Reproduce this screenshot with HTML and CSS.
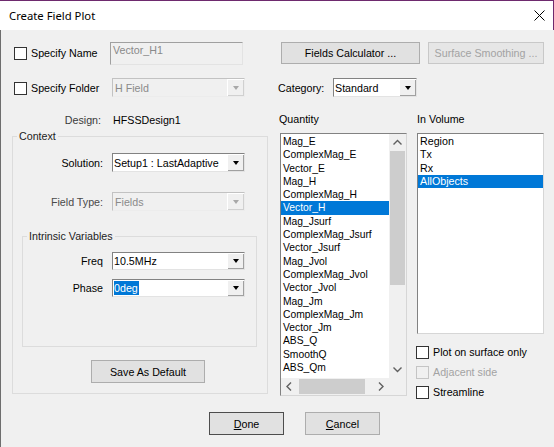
FILE: index.html
```html
<!DOCTYPE html>
<html>
<head>
<meta charset="utf-8">
<title>Create Field Plot</title>
<link rel="stylesheet" href="styles.css">
</head>
<body>
<div class="window">
  <div class="titlebar">
    <span class="title">Create Field Plot</span>
    <svg class="close" width="11" height="11" viewBox="0 0 11 11"><path d="M0.5 0.5L10.5 10.5M10.5 0.5L0.5 10.5" stroke="#000" stroke-width="1" fill="none"/></svg>
  </div>
  <div class="client">
    <div class="row row-a">
      <div class="left-a">
        <span class="cb cb-a"></span><span class="cb-label w-name">Specify Name</span>
        <div class="edit disabled">Vector_H1</div>
      </div>
      <button class="btn calc">Fields Calculator ...</button>
      <button class="btn smooth disabled">Surface Smoothing ...</button>
    </div>

    <div class="row row-b">
      <div class="left-b">
        <span class="cb cb-b"></span><span class="cb-label w-folder">Specify Folder</span>
        <div class="combo disabled w133"><span class="combo-text">H Field</span><span class="combo-btn"><i class="tri"></i></span></div>
      </div>
      <span class="cat-label">Category:</span>
      <div class="combo w84"><span class="combo-text">Standard</span><span class="combo-btn"><i class="tri"></i></span></div>
    </div>

    <div class="section">
      <div class="col-l">
        <div class="design-row"><span class="design-label">Design:</span><span class="design-value">HFSSDesign1</span></div>
        <fieldset class="group context">
          <legend>Context</legend>
          <div class="frow">
            <span class="flabel ctx-label">Solution:</span>
            <div class="combo w133"><span class="combo-text">Setup1 : LastAdaptive</span><span class="combo-btn"><i class="tri"></i></span></div>
          </div>
          <div class="frow frow-gap">
            <span class="flabel ctx-label dim">Field Type:</span>
            <div class="combo disabled w133"><span class="combo-text">Fields</span><span class="combo-btn"><i class="tri"></i></span></div>
          </div>
          <fieldset class="group intrinsic">
            <legend>Intrinsic Variables</legend>
            <div class="frow frow-s">
              <span class="flabel int-label">Freq</span>
              <div class="combo w133 h18"><span class="combo-text">10.5MHz</span><span class="combo-btn"><i class="tri"></i></span></div>
            </div>
            <div class="frow frow-s frow-gap2">
              <span class="flabel int-label">Phase</span>
              <div class="combo w133 h18"><span class="combo-text"><span class="seltext">0deg</span></span><span class="combo-btn"><i class="tri"></i></span></div>
            </div>
          </fieldset>
          <button class="btn save">Save As Default</button>
        </fieldset>
      </div>

      <div class="col-m">
        <div class="col-label">Quantity</div>
        <div class="listbox qlist">
          <div class="items qitems">
            <div class="item">Mag_E</div>
            <div class="item">ComplexMag_E</div>
            <div class="item">Vector_E</div>
            <div class="item">Mag_H</div>
            <div class="item">ComplexMag_H</div>
            <div class="item sel">Vector_H</div>
            <div class="item">Mag_Jsurf</div>
            <div class="item">ComplexMag_Jsurf</div>
            <div class="item">Vector_Jsurf</div>
            <div class="item">Mag_Jvol</div>
            <div class="item">ComplexMag_Jvol</div>
            <div class="item">Vector_Jvol</div>
            <div class="item">Mag_Jm</div>
            <div class="item">ComplexMag_Jm</div>
            <div class="item">Vector_Jm</div>
            <div class="item">ABS_Q</div>
            <div class="item">SmoothQ</div>
            <div class="item">ABS_Qm</div>
          </div>
          <div class="vscroll">
            <span class="arrow"><svg width="17" height="17" viewBox="0 0 17 17"><path d="M4.5 10.5L8.5 6.5L12.5 10.5" stroke="#606060" stroke-width="1.4" fill="none"/></svg></span>
            <span class="vthumb"></span>
            <span class="spacer"></span>
            <span class="arrow"><svg width="17" height="17" viewBox="0 0 17 17"><path d="M4.5 6.5L8.5 10.5L12.5 6.5" stroke="#606060" stroke-width="1.4" fill="none"/></svg></span>
          </div>
          <div class="hscroll">
            <span class="arrow"><svg width="17" height="17" viewBox="0 0 17 17"><path d="M10 4.5L6 8.5L10 12.5" stroke="#606060" stroke-width="1.4" fill="none"/></svg></span>
            <span class="hthumb"></span>
            <span class="spacer"></span>
            <span class="arrow"><svg width="17" height="17" viewBox="0 0 17 17"><path d="M7 4.5L11 8.5L7 12.5" stroke="#606060" stroke-width="1.4" fill="none"/></svg></span>
          </div>
          <div class="corner"></div>
        </div>
      </div>

      <div class="col-r">
        <div class="col-label">In Volume</div>
        <div class="listbox vlist">
          <div class="items vitems">
            <div class="item">Region</div>
            <div class="item">Tx</div>
            <div class="item">Rx</div>
            <div class="item sel">AllObjects</div>
          </div>
        </div>
        <div class="checks">
          <div class="check-row"><span class="cb"></span><span class="cb-label">Plot on surface only</span></div>
          <div class="check-row disabled"><span class="cb"></span><span class="cb-label">Adjacent side</span></div>
          <div class="check-row"><span class="cb"></span><span class="cb-label">Streamline</span></div>
        </div>
      </div>
    </div>

    <div class="row row-bottom">
      <button class="btn done"><u>D</u>one</button>
      <button class="btn cancel"><u>C</u>ancel</button>
    </div>
  </div>
</div>
</body>
</html>
```

FILE: styles.css
```css
* { box-sizing: border-box; }
html, body { margin: 0; padding: 0; }
body {
  width: 554px;
  height: 447px;
  overflow: hidden;
  background: #f0f0f0;
  font-family: "Liberation Sans", Arial, sans-serif;
  font-size: 10.7px;
  color: #000;
}
.window {
  width: 554px;
  height: 447px;
  display: flex;
  flex-direction: column;
}
.titlebar {
  height: 30px;
  flex: none;
  background: #fff;
  box-shadow: inset 0 1px 0 #6e2a6e, inset -1px 0 0 #6e2a6e;
  display: flex;
  align-items: center;
  padding-left: 9px;
  padding-top: 1px;
}
.title {
  flex: 1;
  font-family: "Noto Sans", "Liberation Sans", sans-serif;
  font-size: 11.3px;
}
.close { margin-right: 9px; }
.client {
  flex: 1;
  box-shadow: inset 1px 0 0 #6e6e6e;
}

.row { display: flex; align-items: flex-start; }
.row-a { margin-top: 12px; height: 23px; }
.row-b { margin-top: 13px; height: 19px; align-items: center; }

.left-a { width: 281px; display: flex; align-items: flex-start; padding-left: 14px; }
.left-b { width: 278px; display: flex; align-items: flex-start; padding-left: 14px; }

.cb {
  width: 13px;
  height: 13px;
  flex: none;
  background: #fff;
  border: 1px solid #333;
}
.cb-a { margin-top: 5px; }
.cb-b { margin-top: 4px; }
.cb-label { margin-left: 4px; line-height: 13px; white-space: nowrap; }
.w-name { width: 79px; margin-top: 5px; }
.w-folder { width: 81px; margin-top: 4px; }

.edit {
  width: 133px;
  height: 23px;
  border: 1px solid;
  border-color: #a0a0a0 #e3e3e3 #e3e3e3 #a0a0a0;
  padding: 1px 2px;
  line-height: 13px;
  background: #fff;
}
.edit.disabled { background: #f0f0f0; color: #8a8a8a; }

.btn {
  font: inherit;
  color: #000;
  background: #e1e1e1;
  border: 1px solid #adadad;
  padding: 0;
  margin: 0;
  text-align: center;
}
.btn.disabled { background: #e6e6e6; border-color: #c8c8c8; color: #a3a3a3; }
.calc { width: 139px; height: 22px; }
.smooth { width: 116px; height: 22px; margin-left: 8px; }

.combo {
  display: flex;
  height: 19px;
  border: 1px solid;
  border-color: #828282 #e3e3e3 #e3e3e3 #828282;
  background: #fff;
}
.combo.h18 { height: 18px; }
.w133 { width: 133px; }
.w84 { width: 84px; }
.combo-text {
  flex: 1;
  padding-left: 1px;
  display: flex;
  align-items: center;
  white-space: nowrap;
  overflow: hidden;
}
.combo-btn {
  width: 17px;
  flex: none;
  background: #f0f0f0;
  display: flex;
  align-items: center;
  justify-content: center;
  box-shadow: inset 1px 1px 0 #fff, inset -1px -1px 0 #a0a0a0;
}
.tri {
  width: 0;
  height: 0;
  border-left: 3.5px solid transparent;
  border-right: 3.5px solid transparent;
  border-top: 4px solid #000;
}
.combo.disabled { background: #f0f0f0; border-color: #c2c2c2 #ececec #ececec #c2c2c2; }
.combo.disabled .combo-text { color: #8a8a8a; padding-left: 2px; }
.combo.disabled .tri { border-top-color: #a8a8a8; }
.combo.disabled .combo-btn { box-shadow: inset 1px 1px 0 #fff, inset -1px -1px 0 #d0d0d0; }
.seltext { background: #0078d7; color: #fff; line-height: 14px; padding-right: 1px; }

.cat-label { width: 55px; white-space: nowrap; }

.section { display: flex; margin-top: 16px; height: 283px; }
.col-l { width: 279px; flex: none; }
.col-m { width: 137px; flex: none; }
.col-r { width: 138px; flex: none; }

.design-row { height: 14px; line-height: 14px; display: flex; }
.design-label { width: 101px; text-align: right; color: #3a3a3a; }
.design-value { margin-left: 12px; }

.group {
  margin: 0;
  padding: 0;
  border: 1px solid #dcdcdc;
  min-width: 0;
}
.group legend {
  padding: 0 2px;
  margin-left: 4px;
  line-height: 14px;
  height: 14px;
  color: #222;
}
.context {
  margin-left: 12px;
  margin-top: 2px;
  width: 256px;
  padding-top: 10px;
  padding-bottom: 10px;
}
.intrinsic {
  margin-left: 9px;
  margin-top: 18px;
  width: 235px;
  padding-top: 9px;
  padding-bottom: 49px;
}
.frow { display: flex; align-items: center; height: 19px; }
.frow-s { height: 18px; }
.frow-gap { margin-top: 20px; }
.frow-gap2 { margin-top: 9px; }
.flabel { text-align: right; white-space: nowrap; margin-right: 9px; }
.ctx-label { width: 90px; }
.int-label { width: 80px; }
.dim { color: #4a4a4a; }
.save { display: block; margin-top: 13px; margin-left: 78px; width: 114px; height: 23px; }

.col-label { height: 13px; line-height: 13px; white-space: nowrap; }
.col-m .col-label { margin-left: 0; }
.col-r .col-label { margin-left: 1px; }

.listbox {
  margin-top: 7px;
  margin-left: 1px;
  width: 127px;
  border: 1px solid;
  border-color: #828282 #d6d6d6 #d6d6d6 #828282;
  background: #fff;
}
.qlist {
  height: 263px;
  display: grid;
  grid-template-columns: minmax(0, 1fr) 17px;
  grid-template-rows: minmax(0, 1fr) 17px;
}
.vlist { height: 201px; }
.items { overflow: hidden; padding-top: 1px; min-height: 0; }
.qitems { font-size: 10.3px; }
.item {
  height: 13.3px;
  line-height: 13.3px;
  padding-left: 2px;
  white-space: nowrap;
}
.item.sel { background: #0078d7; color: #fff; }

.vscroll {
  background: #f0f0f0;
  display: flex;
  flex-direction: column;
  min-height: 0;
}
.hscroll {
  background: #f0f0f0;
  display: flex;
}
.corner { background: #f0f0f0; }
.arrow { width: 17px; height: 17px; flex: none; display: block; }
.arrow svg { display: block; }
.spacer { flex: 1; }
.vthumb { height: 134px; margin: 0 1px; background: #cdcdcd; flex: none; }
.hthumb { width: 66px; margin: 1px 0 1px 1px; background: #cdcdcd; flex: none; }

.checks { margin-top: 12px; display: flex; flex-direction: column; gap: 7px; }
.check-row { display: flex; align-items: center; height: 13px; }
.check-row .cb-label { margin-left: 4px; }
.check-row.disabled .cb { border-color: #c4c4c4; background: #f0f0f0; }
.check-row.disabled .cb-label { color: #a3a3a3; }

.row-bottom { margin-top: 16px; padding-left: 209px; }
.done { width: 75px; height: 23px; border-color: #4d4d4d; }
.cancel { width: 75px; height: 23px; margin-left: 21px; }
```
